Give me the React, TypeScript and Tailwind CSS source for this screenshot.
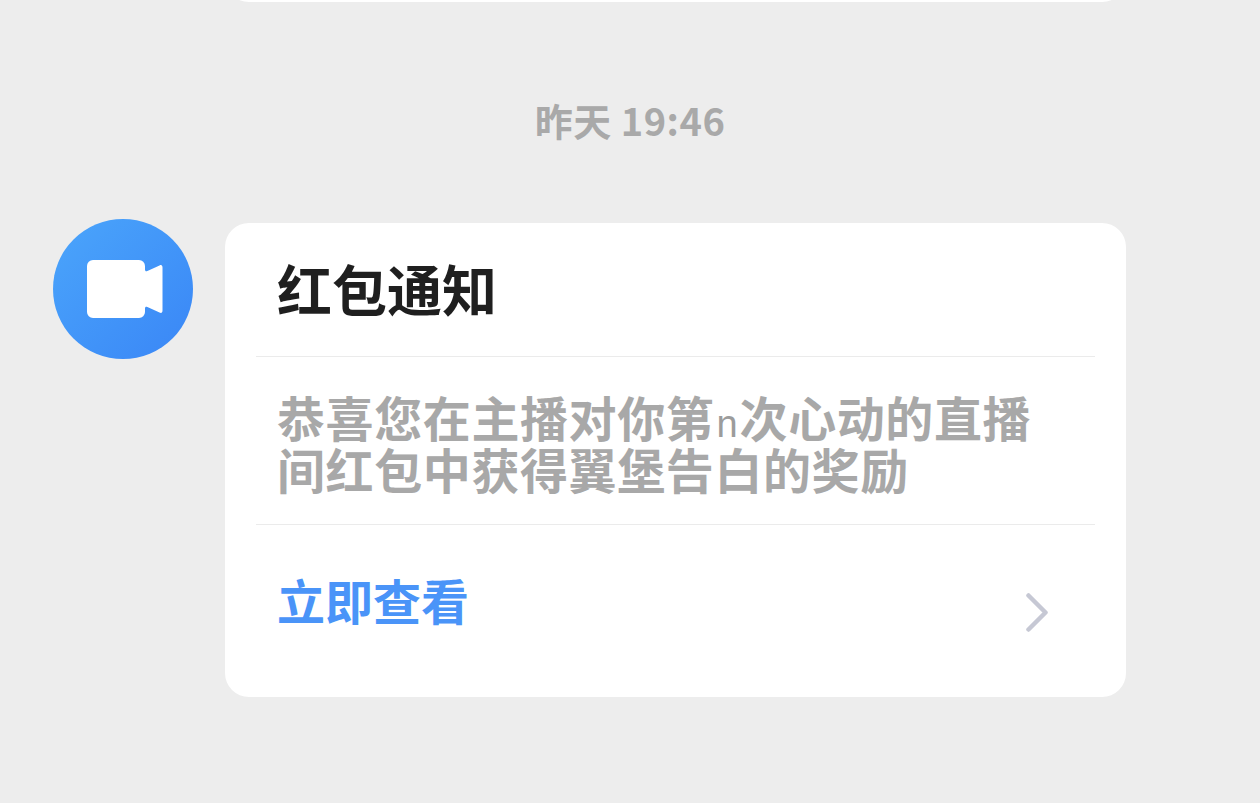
export default function App() {
  const font = { fontFamily: '"Noto Sans CJK SC", "Noto Sans", sans-serif' };
  return (
    <div className="w-[1260px] h-[803px] bg-[#ededed] overflow-hidden" style={font}>
      <div className="ml-[225px] w-[901px] h-[60px] -mt-[58px] bg-white rounded-b-[24px]" />
      <div className="h-[99px]" />
      <div className="h-[38px] flex items-center justify-center text-[38px] leading-[38px] font-bold text-[#a9a9a9] tracking-[0.5px]">
        昨天 19:46
      </div>
      <div className="flex items-start pl-[53px] mt-[80px]">
        <div className="w-[140px] h-[140px] rounded-full bg-gradient-to-br from-[#4ba5fb] to-[#3a86f6] flex items-center justify-center shrink-0">
          <svg width="76" height="58" viewBox="0 0 76 58" className="ml-[4px]">
            <path d="M6 0h46a6 6 0 0 1 6 6v3.500c0 1.500 1 2.200 2.400 1.500L72.500 5.400C74.500 4.500 75.500 5.500 75.500 7.500v43c0 2-1 3-3 2.100L60.400 47c-1.400-.7-2.400 0-2.400 1.500V52a6 6 0 0 1-6 6H6a6 6 0 0 1-6-6V6a6 6 0 0 1 6-6z" fill="#ffffff" />
          </svg>
        </div>
        <div className="ml-[32px] mt-[4px] w-[901px] h-[474px] bg-white rounded-[24px] px-[31px] flex flex-col">
          <div className="h-[134px] border-b border-[#ebebeb] flex items-start pt-[29px] pl-[21px]">
            <span className="text-[55px] leading-[70px] font-bold text-[#1f1f1f]">红包通知</span>
          </div>
          <div className="h-[168px] border-b border-[#ebebeb] pl-[21px] pt-[33px] text-[48px] leading-[52px] font-bold text-[#a8a8a8] tracking-[0.6px]">
            <p className="whitespace-nowrap">
              恭喜您在主播对你第<span className="mx-[2px] font-normal text-[38px] leading-[0] tracking-normal text-[#9c9c9c]" style={{ fontFamily: '"Liberation Sans", sans-serif' }}>n</span>次心动的直播
            </p>
            <p className="whitespace-nowrap">间红包中获得翼堡告白的奖励</p>
          </div>
          <div className="flex-1 flex items-start justify-between pl-[21px] pr-[47px]">
            <span className="mt-[44px] text-[48px] leading-[60px] font-bold text-[#4a94f8]">立即查看</span>
            <svg width="22" height="39" viewBox="0 0 22 39" className="mt-[68px]">
              <path d="M2.500 2.500l17 17-17 17" fill="none" stroke="#c6c8d4" strokeWidth="4.500" strokeLinecap="round" strokeLinejoin="round" />
            </svg>
          </div>
        </div>
      </div>
    </div>
  );
}
